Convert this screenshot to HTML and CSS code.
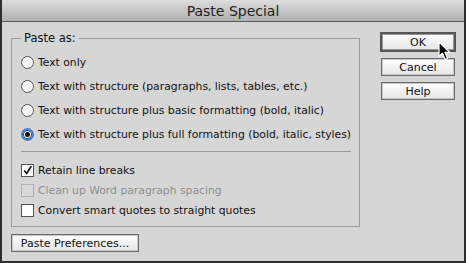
FILE: index.html
```html
<!DOCTYPE html>
<html lang="en">
<head>
    <meta charset="UTF-8">
    <title>Paste Special</title>
    <link rel="stylesheet" href="styles.css">
</head>
<body>
    <div class="dialog">
        <div class="titlebar">Paste Special</div>
        <div class="content">
            <div class="main">
                <fieldset class="group">
                    <legend>Paste as:</legend>
                    <div class="radios">
                        <label class="opt"><span class="radio"></span>Text only</label>
                        <label class="opt"><span class="radio"></span>Text with structure (paragraphs, lists, tables, etc.)</label>
                        <label class="opt"><span class="radio"></span>Text with structure plus basic formatting (bold, italic)</label>
                        <label class="opt"><span class="radio checked"></span>Text with structure plus full formatting (bold, italic, styles)</label>
                    </div>
                    <div class="sep"></div>
                    <div class="checks">
                        <label class="opt"><span class="check on">
                            <svg viewBox="0 0 13 13" width="13" height="13"><path d="M2.5 6.5 L5.5 10 L11 1.5" fill="none" stroke="#111" stroke-width="2"/></svg>
                        </span>Retain line breaks</label>
                        <label class="opt disabled"><span class="check"></span>Clean up Word paragraph spacing</label>
                        <label class="opt"><span class="check"></span>Convert smart quotes to straight quotes</label>
                    </div>
                </fieldset>
                <button class="btn prefs">Paste Preferences...</button>
            </div>
            <div class="side">
                <button class="btn default">OK</button>
                <button class="btn">Cancel</button>
                <button class="btn">Help</button>
            </div>
        </div>
        <svg class="cursor" viewBox="0 0 13 20" width="13" height="20">
            <path d="M1 1 L1 15.5 L4.5 12.2 L7.2 18.5 L9.6 17.4 L7 11.3 L11.8 11.3 Z" fill="#000" stroke="#fff" stroke-width="1.2" stroke-linejoin="round"/>
        </svg>
    </div>
</body>
</html>
```

FILE: styles.css
```css
* {
    box-sizing: border-box;
}
body {
    margin: 0;
    font-family: "DejaVu Sans", sans-serif;
    font-size: 10.8px;
    color: #111;
}
.dialog {
    position: relative;
    width: 466px;
    height: 263px;
    background: #d6d6d6;
    border: 2px solid #2e2e2e;
    border-top: none;
    display: flex;
    flex-direction: column;
}
.titlebar {
    height: 22px;
    background: linear-gradient(#dcdcdc, #b0b0b0);
    border-bottom: 1px solid #5a5a5a;
    text-align: center;
    font-size: 14px;
    line-height: 22px;
    color: #222;
}
.content {
    flex: 1;
    display: flex;
    padding: 9px 9px 0 9px;
}
.main {
    width: 348px;
    display: flex;
    flex-direction: column;
    gap: 7px;
}
.group {
    margin: 0;
    padding: 6px 8px 6px 9px;
    border: 1px solid #9c9c9c;
    height: 196px;
}
.group legend {
    padding: 0 3px;
    margin-left: 0;
    font-size: 11.5px;
}
.radios {
    display: flex;
    flex-direction: column;
    gap: 8px;
    padding-top: 3px;
}
.opt {
    display: flex;
    align-items: center;
    gap: 4px;
    height: 16px;
    white-space: nowrap;
}
.radio {
    width: 13px;
    height: 13px;
    border: 1px solid #555;
    border-radius: 50%;
    background: linear-gradient(#fff, #f0f0f0);
    flex: none;
    display: flex;
    align-items: center;
    justify-content: center;
}
.radio.checked {
    border: 2px solid #3d7fd1;
    box-shadow: inset 0 0 0 1px #1c3e6c;
}
.radio.checked::after {
    content: "";
    width: 5px;
    height: 5px;
    border-radius: 50%;
    background: #111;
}
.sep {
    height: 1px;
    background: #9c9c9c;
    margin: 9px 0 10px 0;
}
.checks {
    display: flex;
    flex-direction: column;
    gap: 4px;
}
.check {
    width: 13px;
    height: 13px;
    border: 1px solid #555;
    background: #fff;
    flex: none;
    display: flex;
    align-items: center;
    justify-content: center;
}
.check svg {
    display: block;
}
.opt.disabled {
    color: #8f8f8f;
}
.opt.disabled .check {
    border-color: #b0b0b0;
    background: #d9d9d9;
}
.btn {
    font-family: "DejaVu Sans", sans-serif;
    font-size: 11px;
    color: #111;
    background: linear-gradient(#fdfdfd, #e6e6e6);
    border: 1px solid #6a6a6a;
    box-shadow: inset 0 0 0 1px #c8c8c8;
    height: 18px;
    padding: 0;
}
.prefs {
    width: 128px;
    margin-left: 0;
}
.side {
    margin-left: 21px;
    width: 76px;
    display: flex;
    flex-direction: column;
    gap: 6px;
    padding-top: 1px;
}
.side .btn {
    width: 74px;
    margin-left: 1px;
}
.side .default {
    width: 76px;
    height: 20px;
    margin: 0 0 0 0;
    border: 2px solid #555;
    box-shadow: inset 0 0 0 1px #999;
}
.cursor {
    position: absolute;
    left: 436px;
    top: 41px;
}
```
